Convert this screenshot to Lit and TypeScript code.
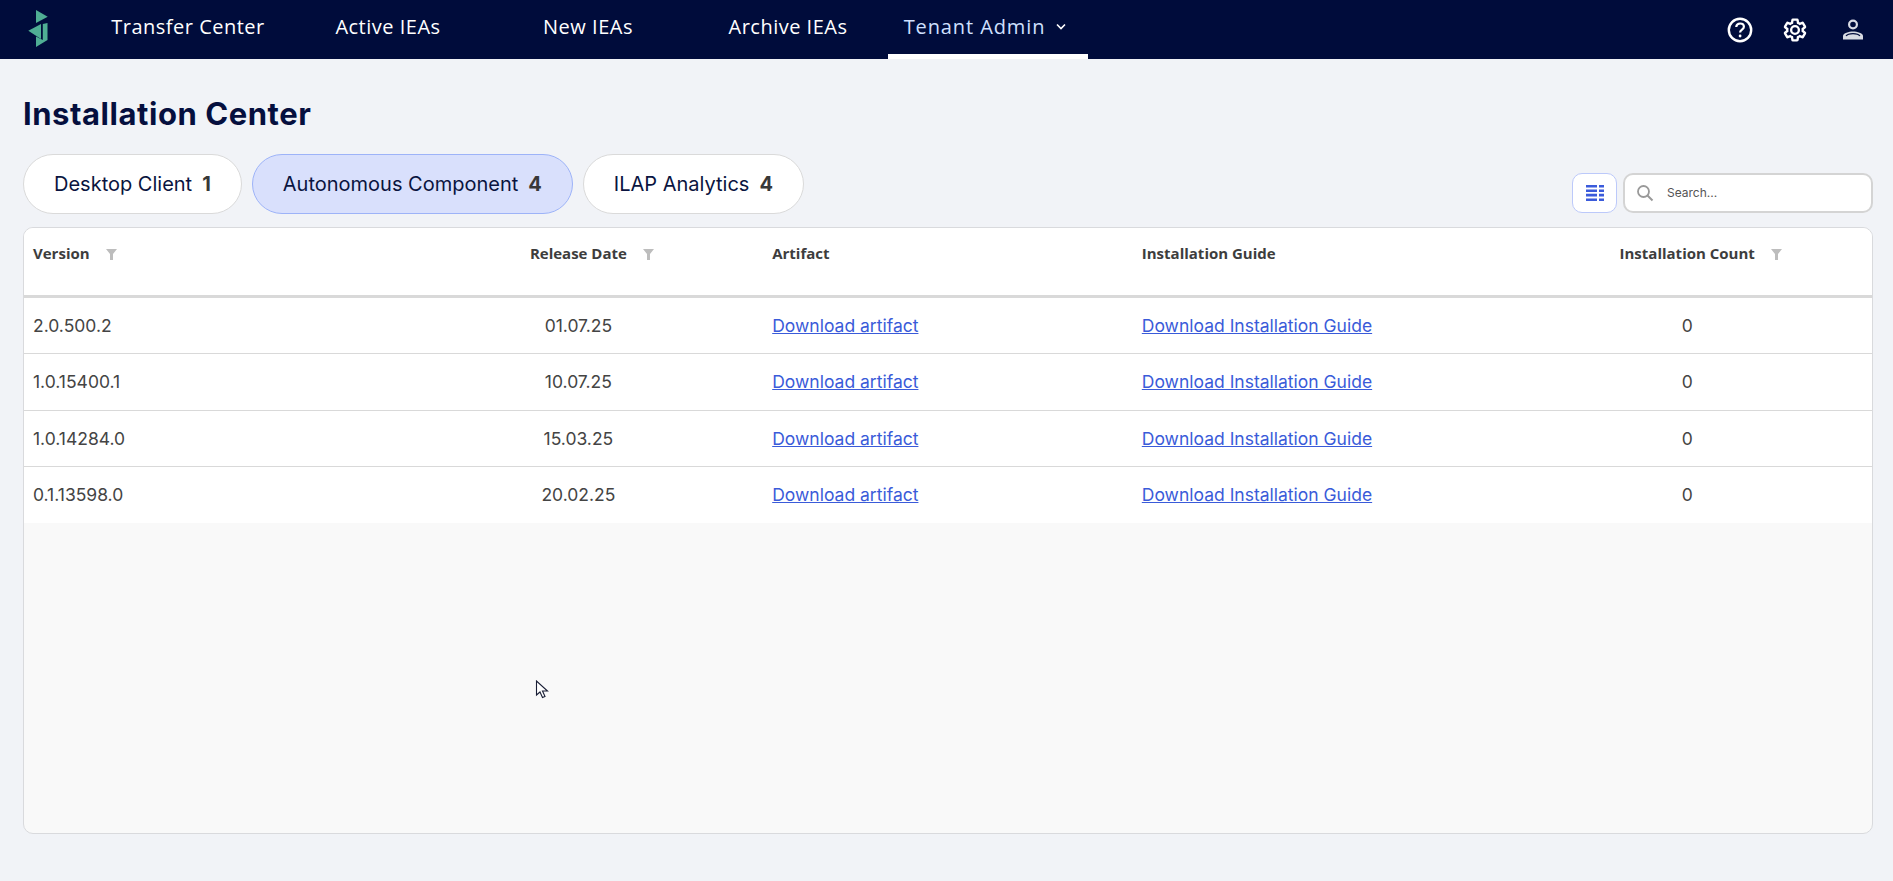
import { LitElement, html, css, svg } from "lit";
import { customElement } from "lit/decorators.js";

const NAV = ["Transfer Center", "Active IEAs", "New IEAs", "Archive IEAs"];
const TABS = [
  { label: "Desktop Client", count: 1, active: false },
  { label: "Autonomous Component", count: 4, active: true },
  { label: "ILAP Analytics", count: 4, active: false },
];
const ROWS = [
  ["2.0.500.2", "01.07.25"],
  ["1.0.15400.1", "10.07.25"],
  ["1.0.14284.0", "15.03.25"],
  ["0.1.13598.0", "20.02.25"],
];

const funnel = svg`<svg class="funnel" width="11" height="11" viewBox="0 0 11 11"><path d="M0 0h11L7 5v6H4V5z" fill="#bdbdbd"/></svg>`;

@customElement("app-root")
export class AppRoot extends LitElement {
  static styles = css`
    :host { display: block; height: 881px; background: #f1f3f7; font-family: Inter, sans-serif; overflow: hidden; position: relative; }
    .nav { display: flex; height: 59px; background: #000c3b; align-items: stretch; }
    .logo { width: 88px; display: flex; align-items: center; }
    .item { width: 200px; box-sizing: border-box; display: flex; align-items: center; justify-content: center; padding-bottom: 6px; color: #fff; font-family: "Open Sans", sans-serif; font-size: 20px; letter-spacing: 0.5px; gap: 9px; }
    .item.active { border-bottom: 5px solid #fff; padding-bottom: 1px; color: #cfe0ff; letter-spacing: 0.9px; }
    .nav-right { margin-left: auto; display: flex; align-items: center; gap: 26px; padding: 0 25px 0 0; }
    .nav-right svg { display: block; }
    .nav-right .person { margin-left: 3px; }
    main { padding: 0 20px 0 23px; }
    h1 { margin: 0; padding-top: 31px; height: 64px; font-family: Inter, sans-serif; font-weight: 700; font-size: 31px; letter-spacing: 0.55px; line-height: 48px; color: #050f3e; }
    .bar { display: flex; align-items: flex-end; justify-content: space-between; height: 60px; }
    .tabs { display: flex; gap: 10px; }
    .tab { height: 60px; box-sizing: border-box; display: flex; align-items: center; gap: 10px; padding: 0 30px; border-radius: 30px; background: #fff; border: 1px solid #dadada; font-size: 20px; color: #0a1440; }
    .tab.active { background: #d9e0fc; border-color: #9db3f8; }
    .tab b { font-weight: 700; color: #383838; font-size: 20px; }
    .tools { display: flex; gap: 6px; margin-bottom: 1px; }
    .toggle { width: 45px; height: 40px; box-sizing: border-box; border: 1px solid #bcc9fa; border-radius: 10px; background: #fff; display: flex; align-items: center; justify-content: center; }
    .search { width: 250px; height: 40px; box-sizing: border-box; border: 2px solid #d4d4d4; border-radius: 10px; background: #fff; display: flex; align-items: center; gap: 13px; padding: 0 0 1px 11px; font-size: 12px; color: #555; }
    .card { margin-top: 13px; height: 607px; box-sizing: border-box; border: 1px solid #d9dadd; border-radius: 10px; background: #f9f9f9; overflow: hidden; }
    .row { display: grid; grid-template-columns: repeat(5, 1fr); height: 56.25px; box-sizing: border-box; background: #fff; border-bottom: 1px solid #d9d9d9; align-items: center; font-size: 17.5px; color: #444; }
    .row:last-child { border-bottom-color: #fff; }
    .row.head { height: 70px; border-bottom: 3px solid #d9d9d9; align-items: start; padding-top: 15px; font-family: "Open Sans", sans-serif; font-weight: 700; font-size: 15px; color: #3d3d3d; }
    .cell { padding: 0 9px; min-width: 0; }
    .center { text-align: center; }
    .label { position: relative; display: inline-block; line-height: 21px; }
    .funnel { position: absolute; left: 100%; top: 6px; margin-left: 16px; }
    a { color: #3a5bd9; text-decoration: underline; }
    .cursor { position: absolute; left: 535px; top: 680px; }
  `;

  render() {
    return html`
      <div class="nav">
        <div class="logo">
          <svg width="88" height="59" viewBox="0 0 88 59">
            <path d="M36 10 47.700 16.700 36 23z" fill="#4fae94"/>
            <path d="M28.300 30.700 41 24v15z" fill="#4fae94"/>
            <path d="M47.500 23v17L36 47V36.500l6.800 3.500V24z" fill="#4fae94"/>
          </svg>
        </div>
        ${NAV.map((n) => html`<div class="item">${n}</div>`)}
        <div class="item active">Tenant Admin
          <svg width="18" height="8" viewBox="-1 0 18 8"><path d="M2 1.500 6 5.500 10 1.500" fill="none" stroke="#fff" stroke-width="1.600"/></svg>
        </div>
        <div class="nav-right">
          <svg width="30" height="30" viewBox="0 0 30 30">
            <circle cx="15" cy="15" r="11.200" fill="none" stroke="#fff" stroke-width="2.400"/>
            <path d="M11.200 12c.2-2.200 1.800-3.500 3.900-3.500s3.800 1.300 3.800 3.300c0 2.800-3.800 2.800-3.800 5.600" fill="none" stroke="#fff" stroke-width="2.200"/>
            <circle cx="15.100" cy="21" r="1.400" fill="#fff"/>
          </svg>
          <svg width="28" height="28" viewBox="-1 -1 26 26">
            <path d="M19.140 12.940c.04-.3.06-.61.06-.94 0-.32-.02-.64-.07-.94l2.030-1.580a.49.49 0 0 0 .12-.61l-1.920-3.320a.488.488 0 0 0-.59-.22l-2.390.96c-.5-.38-1.030-.7-1.620-.94l-.36-2.540a.484.484 0 0 0-.48-.41h-3.840c-.24 0-.43.17-.47.41l-.36 2.540c-.59.24-1.130.57-1.620.94l-2.390-.96c-.22-.08-.47 0-.59.22L2.740 8.870c-.12.21-.08.47.12.61l2.030 1.580c-.05.3-.09.63-.09.94s.02.64.07.94l-2.030 1.580a.49.49 0 0 0-.12.61l1.920 3.320c.12.22.37.29.59.22l2.390-.96c.5.38 1.030.7 1.620.94l.36 2.540c.05.24.24.41.48.41h3.840c.24 0 .44-.17.47-.41l.36-2.540c.59-.24 1.130-.56 1.620-.94l2.390.96c.22.08.47 0 .59-.22l1.920-3.320c.12-.22.07-.47-.12-.61l-2.010-1.580zM12 15.600c-1.980 0-3.600-1.620-3.600-3.600s1.620-3.600 3.600-3.600 3.600 1.620 3.600 3.600-1.620 3.600-3.600 3.600z" fill="none" stroke="#fff" stroke-width="2.200"/>
          </svg>
          <svg class="person" width="30" height="30" viewBox="0 0 30 30">
            <circle cx="15" cy="9.500" r="3.900" fill="none" stroke="#d8dbe3" stroke-width="2.200"/>
            <path d="M5 24.500v-3.500c0-2.800 6-4.500 10-4.500s10 1.700 10 4.500v3.500z" fill="#d8dbe3"/>
            <path d="M8 21c1-1.300 4.300-2.300 7-2.300s6 1 7 2.300" fill="none" stroke="#000c3b" stroke-width="1.200"/>
          </svg>
        </div>
      </div>
      <main>
        <h1>Installation Center</h1>
        <div class="bar">
          <div class="tabs">
            ${TABS.map((t) => html`<div class="tab ${t.active ? "active" : ""}">${t.label}<b>${t.count}</b></div>`)}
          </div>
          <div class="tools">
            <div class="toggle">
              <svg width="20" height="20" viewBox="0 0 20 20" fill="#3b5bdb">
                <path d="M1 2h11v2.600H1zM14 2h5v2.600h-5zM1 6.400h11V9H1zM14 6.400h5V9h-5zM1 10.800h11v2.600H1zM14 10.800h5v2.600h-5zM1 15.400h11V18H1zM14 15.400h5V18h-5z"/>
              </svg>
            </div>
            <div class="search">
              <svg width="18" height="18" viewBox="0 0 18 18"><circle cx="7.500" cy="7.500" r="5.500" fill="none" stroke="#999" stroke-width="1.800"/><path d="M11.500 11.500 16.500 16.500" stroke="#999" stroke-width="2"/></svg>
              Search...
            </div>
          </div>
        </div>
        <div class="card">
          <div class="row head">
            <div class="cell"><span class="label">Version${funnel}</span></div>
            <div class="cell center"><span class="label">Release Date${funnel}</span></div>
            <div class="cell"><span class="label">Artifact</span></div>
            <div class="cell"><span class="label">Installation Guide</span></div>
            <div class="cell center"><span class="label">Installation Count${funnel}</span></div>
          </div>
          ${ROWS.map((r) => html`
            <div class="row">
              <div class="cell">${r[0]}</div>
              <div class="cell center">${r[1]}</div>
              <div class="cell"><a href="#">Download artifact</a></div>
              <div class="cell"><a href="#">Download Installation Guide</a></div>
              <div class="cell center">0</div>
            </div>`)}
        </div>
      </main>
      <svg class="cursor" width="16" height="20" viewBox="0 0 16 20">
        <path d="M1.500 1v14l3.500-3 2.500 5.500 2.500-1-2.500-5.500h5z" fill="#fff" stroke="#1a1f36" stroke-width="1.100"/>
      </svg>
    `;
  }
}
